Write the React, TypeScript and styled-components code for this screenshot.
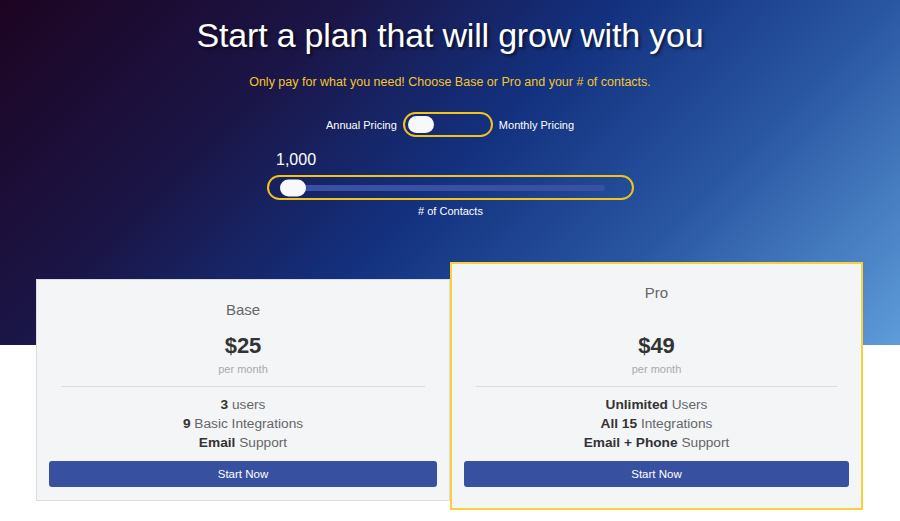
import React from "react";
import styled, { createGlobalStyle } from "styled-components";

const GlobalStyle = createGlobalStyle`
  html, body {
    margin: 0;
    padding: 0;
    background: #ffffff;
    font-family: "Liberation Sans", Arial, sans-serif;
  }
  * {
    box-sizing: border-box;
  }
`;

const plans = [
  {
    name: "Base",
    price: 25,
    featured: false,
    features: [
      ["3", " users"],
      ["9", " Basic Integrations"],
      ["Email", " Support"],
    ],
  },
  {
    name: "Pro",
    price: 49,
    featured: true,
    features: [
      ["Unlimited", " Users"],
      ["All 15", " Integrations"],
      ["Email + Phone", " Support"],
    ],
  },
];

const App = () => {
  return (
    <Page>
      <GlobalStyle />
      <Hero>
        <Title>Start a plan that will grow with you</Title>
        <Subtitle>
          Only pay for what you need! Choose Base or Pro and your # of contacts.
        </Subtitle>
        <ToggleRow>
          <Label>Annual Pricing</Label>
          <Toggle>
            <Knob />
          </Toggle>
          <Label>Monthly Pricing</Label>
        </ToggleRow>
        <SliderBlock>
          <Count>1,000</Count>
          <SliderBox>
            <Track>
              <Thumb />
            </Track>
          </SliderBox>
          <Caption># of Contacts</Caption>
        </SliderBlock>
      </Hero>
      <Cards>
        {plans.map((plan) => (
          <Card key={plan.name} featured={plan.featured}>
            <PlanName featured={plan.featured}>{plan.name}</PlanName>
            <Price>${plan.price}</Price>
            <Period>per month</Period>
            <Divider />
            <Features>
              {plan.features.map(([strong, rest]) => (
                <li key={strong}>
                  <b>{strong}</b>
                  {rest}
                </li>
              ))}
            </Features>
            <Button>Start Now</Button>
          </Card>
        ))}
      </Cards>
    </Page>
  );
};

export default App;

const Page = styled.div`
  width: 100%;
  min-height: 521px;
  background: linear-gradient(
      135deg,
      #1d0421 0%,
      #1b1547 28%,
      #13317f 50%,
      #2a57a2 72%,
      #5e9cda 100%
    )
    top left / 100% 345px no-repeat,
    #ffffff;
`;

const Hero = styled.div`
  display: flex;
  flex-direction: column;
  align-items: center;
  padding-top: 14px;
  color: #ffffff;
`;

const Title = styled.h1`
  margin: 0;
  font-size: 34px;
  line-height: 42px;
  font-weight: 400;
  letter-spacing: -0.2px;
  text-shadow: 2px 2px 3px rgba(0, 0, 0, 0.55);
`;

const Subtitle = styled.p`
  margin: 18px 0 0;
  font-size: 12.5px;
  line-height: 16px;
  color: #f6c62b;
`;

const ToggleRow = styled.div`
  display: flex;
  align-items: center;
  gap: 6px;
  margin-top: 22px;
`;

const Label = styled.span`
  font-size: 11px;
  line-height: 14px;
`;

const Toggle = styled.div`
  width: 90px;
  height: 25px;
  border: 2px solid #f2c31c;
  border-radius: 13px;
  display: flex;
  align-items: center;
  padding-left: 3px;
`;

const Knob = styled.span`
  width: 26px;
  height: 17px;
  border-radius: 9px;
  background: #f7f8fa;
`;

const SliderBlock = styled.div`
  width: 367px;
  margin-top: 13px;
  margin-left: 1px;
  display: flex;
  flex-direction: column;
`;

const Count = styled.div`
  font-size: 16px;
  line-height: 20px;
  padding-left: 9px;
`;

const SliderBox = styled.div`
  margin-top: 5px;
  height: 25px;
  border: 2px solid #f2c31c;
  border-radius: 13px;
  display: flex;
  align-items: center;
  padding: 0 27px 0 16px;
`;

const Track = styled.div`
  position: relative;
  flex: 1;
  height: 6px;
  border-radius: 3px;
  background: #3a50a2;
`;

const Thumb = styled.span`
  position: absolute;
  left: -5px;
  top: 50%;
  transform: translateY(-50%);
  width: 26px;
  height: 17px;
  border-radius: 9px;
  background: #f7f8fa;
`;

const Caption = styled.div`
  margin-top: 4px;
  text-align: center;
  font-size: 11px;
  line-height: 14px;
`;

const Cards = styled.div`
  display: grid;
  grid-template-columns: 414px 413px;
  justify-content: center;
  align-items: start;
  margin-top: 44px;
  padding-right: 1px;
`;

const Card = styled.div<{ featured?: boolean }>`
  display: flex;
  flex-direction: column;
  align-items: stretch;
  text-align: center;
  background: #f4f5f7;
  border: ${(p) => (p.featured ? "2px solid #f8d13a" : "1px solid #dcdde0")};
  margin-top: ${(p) => (p.featured ? "0" : "17px")};
  padding: ${(p) => (p.featured ? "19px 12px 21px" : "20px 12px 13px")};
`;

const PlanName = styled.div<{ featured?: boolean }>`
  font-size: 15px;
  line-height: 20px;
  color: #666666;
  margin-bottom: ${(p) => (p.featured ? "30px" : "13px")};
`;

const Price = styled.div`
  font-size: 22px;
  line-height: 26px;
  font-weight: 700;
  color: #333333;
`;

const Period = styled.div`
  margin-top: 3px;
  font-size: 11px;
  line-height: 14px;
  color: #aaaaaa;
`;

const Divider = styled.hr`
  margin: 10px 12px 0;
  border: 0;
  border-top: 1px solid #dddddd;
`;

const Features = styled.ul`
  list-style: none;
  margin: 8px 0 0;
  padding: 0;
  font-size: 13.7px;
  line-height: 19px;
  color: #666666;

  b {
    color: #333333;
    font-weight: 700;
  }
`;

const Button = styled.button`
  margin-top: 9px;
  height: 26px;
  border: 0;
  border-radius: 3px;
  background: #3850a0;
  color: #ffffff;
  font-family: inherit;
  font-size: 11.5px;
  cursor: pointer;
`;
